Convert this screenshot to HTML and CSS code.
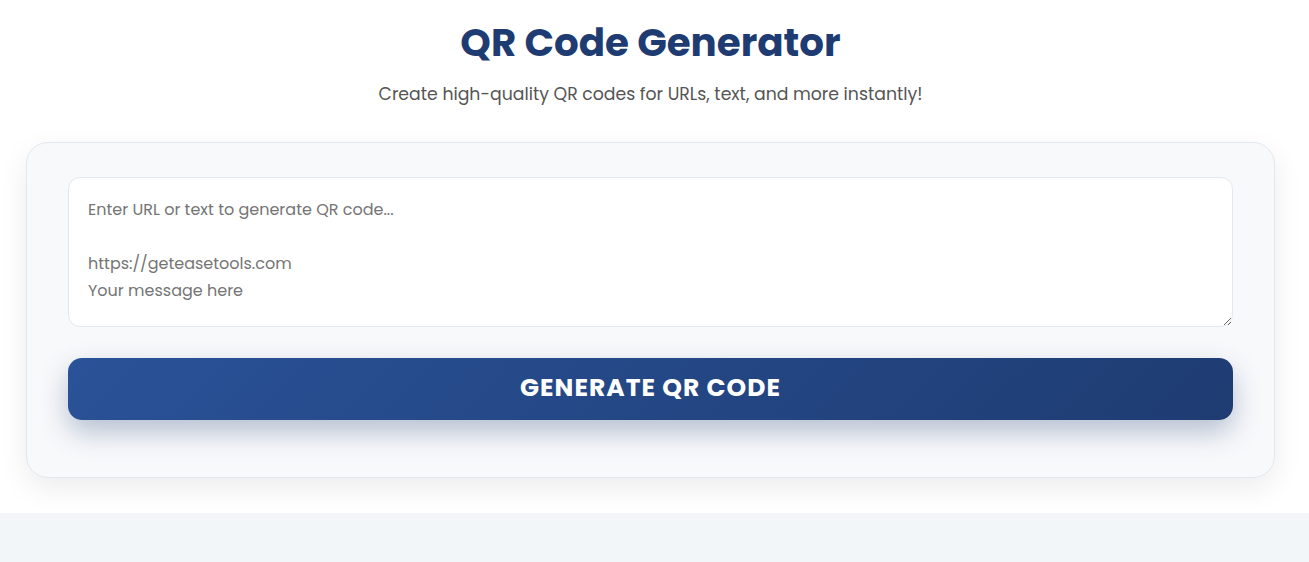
FILE: index.html
```html
<!DOCTYPE html>
<html lang="en">
<head>
<meta charset="utf-8">
<title>QR Code Generator</title>
<link rel="stylesheet" href="styles.css">
</head>
<body>
<main class="hero">
  <div class="container">
    <header class="head">
      <h1 class="title">QR Code Generator</h1>
      <p class="subtitle">Create high-quality QR codes for URLs, text, and more instantly!</p>
    </header>
    <section class="card">
      <form class="form">
        <textarea class="input" placeholder="Enter URL or text to generate QR code...

https://geteasetools.com
Your message here"></textarea>
        <button type="button" class="btn">Generate QR Code</button>
      </form>
    </section>
  </div>
</main>
<footer class="band"></footer>
</body>
</html>
```

FILE: styles.css
```css
* { box-sizing: border-box; }
html, body { margin: 0; padding: 0; }
body {
  font-family: "Poppins", "Open Sans", "Noto Sans", sans-serif;
  background: #ffffff;
  color: #333;
}
.hero {
  background: #ffffff;
  padding: 0 0 35px;
}
.container {
  width: 1301px;
  padding: 0 26px;
}
.head {
  text-align: center;
  padding-top: 19px;
}
.title {
  margin: 0;
  font-size: 38.8px;
  line-height: 48px;
  font-weight: 700;
  color: #1e3c72;
}
.subtitle {
  margin: 13px 0 0;
  font-size: 17.3px;
  line-height: 28px;
  color: #555;
}
.card {
  margin-top: 34px;
  background: #f8f9fb;
  border: 1px solid #e3e8f0;
  border-radius: 22px;
  padding: 34px 41px 57px;
  box-shadow: 0 10px 30px rgba(0, 0, 0, 0.08);
}
.form {
  display: flex;
  flex-direction: column;
  gap: 31px;
}
.input {
  display: block;
  width: 100%;
  height: 150px;
  padding: 18px 19px;
  border: 1px solid #e3e8f0;
  border-radius: 12px;
  background: #fff;
  font-family: inherit;
  font-size: 16px;
  line-height: 27px;
  color: #333;
  resize: vertical;
  outline: none;
}
.input::placeholder { color: #757575; }
.btn {
  display: block;
  width: 100%;
  height: 62px;
  padding: 0 0 3px;
  border: none;
  border-radius: 14px;
  background: linear-gradient(135deg, #2a5298 0%, #1e3c72 100%);
  color: #fff;
  font-family: inherit;
  font-size: 25px;
  font-weight: 700;
  text-transform: uppercase;
  letter-spacing: 1px;
  box-shadow: 0 12px 28px rgba(30, 60, 114, 0.3);
  cursor: pointer;
}
.band {
  height: 49px;
  background: #f3f6f9;
}
```
